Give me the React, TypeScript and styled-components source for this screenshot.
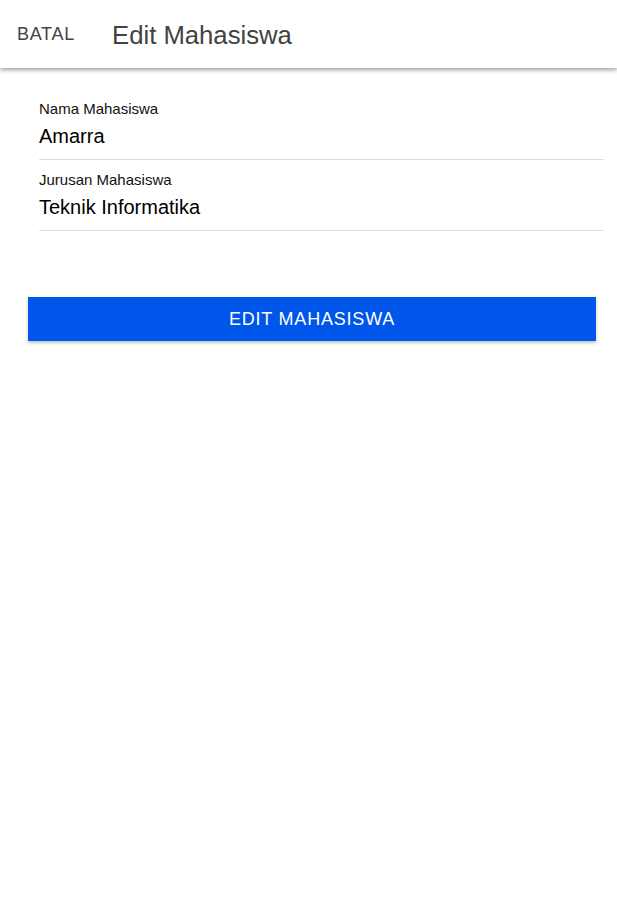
import React from "react";
import styled, { createGlobalStyle } from "styled-components";

const Global = createGlobalStyle`
  html, body { margin: 0; padding: 0; background: #fff; }
  body { font-family: "Liberation Sans", Arial, sans-serif; }
`;

const Page = styled.div`
  width: 617px;
  min-height: 901px;
  display: flex;
  flex-direction: column;
`;

const Toolbar = styled.header`
  height: 68px;
  display: flex;
  align-items: center;
  box-shadow: 0 2px 4px rgba(0,0,0,0.3), 0 1px 6px rgba(0,0,0,0.12);
  position: relative;
  z-index: 1;
`;

const CancelButton = styled.button`
  background: none;
  border: none;
  padding: 0;
  margin-left: 17px;
  font-family: inherit;
  font-size: 18px;
  letter-spacing: 0.7px;
  color: #444;
  width: 95px;
  text-align: left;
`;

const Title = styled.h1`
  margin: 0;
  margin-top: 2px;
  font-size: 25.7px;
  font-weight: 400;
  color: #424242;
`;

const Content = styled.main`
  display: flex;
  flex-direction: column;
  padding: 32px 13px 0 39px;
`;

const Field = styled.div`
  display: flex;
  flex-direction: column;
  border-bottom: 1px solid #dedede;
  padding-bottom: 11px;
  margin-bottom: 11px;
`;

const Label = styled.label`
  font-size: 15px;
  color: #111;
  line-height: 18px;
`;

const Value = styled.div`
  font-size: 20px;
  color: #000;
  line-height: 24px;
  margin-top: 6px;
`;

const ActionWrap = styled.div`
  padding: 55px 21px 0 28px;
`;

const PrimaryButton = styled.button`
  width: 100%;
  height: 44px;
  border: none;
  background: #0055ea;
  color: #fff;
  font-family: inherit;
  font-size: 18px;
  letter-spacing: 0.8px;
  box-shadow: 0 2px 3px rgba(0,0,0,0.25);
`;

export default function App() {
  return (
    <Page>
      <Global />
      <Toolbar>
        <CancelButton>BATAL</CancelButton>
        <Title>Edit Mahasiswa</Title>
      </Toolbar>
      <Content>
        <Field>
          <Label>Nama Mahasiswa</Label>
          <Value>Amarra</Value>
        </Field>
        <Field>
          <Label>Jurusan Mahasiswa</Label>
          <Value>Teknik Informatika</Value>
        </Field>
      </Content>
      <ActionWrap>
        <PrimaryButton>EDIT MAHASISWA</PrimaryButton>
      </ActionWrap>
    </Page>
  );
}
